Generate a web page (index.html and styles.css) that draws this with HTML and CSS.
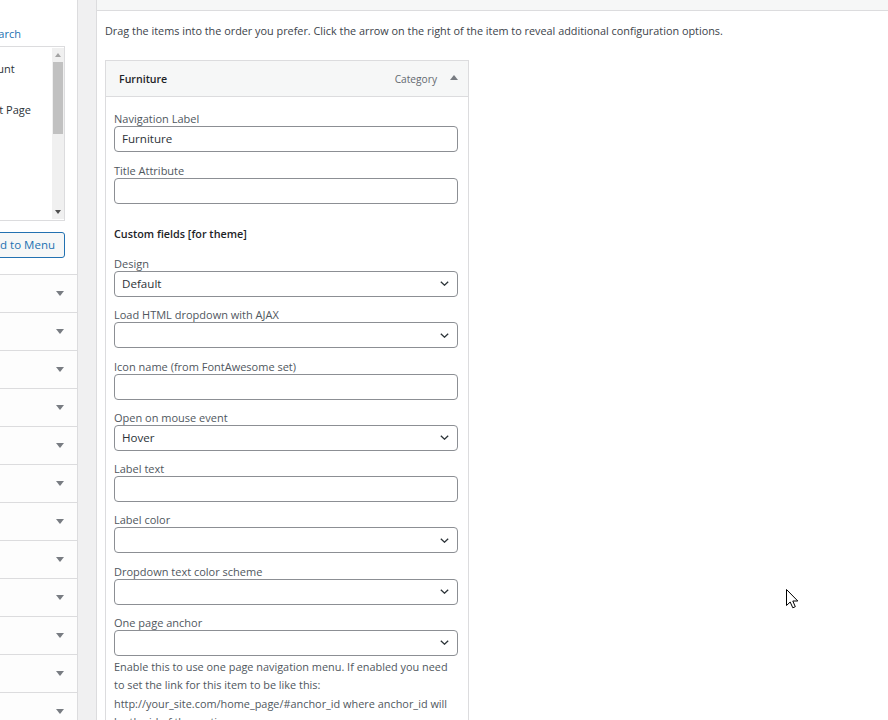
FILE: index.html
```html
<!DOCTYPE html>
<html>
<head>
<meta charset="utf-8">
<title>Menus</title>
<link rel="stylesheet" href="styles.css">
</head>
<body>
<div class="page">
  <aside class="side">
    <div class="side-inner">
      <div class="tabs"><a class="tab-link">Search</a></div>
      <div class="listbox">
        <ul class="items">
          <li><span class="cb"></span>My Account</li>
          <li><span class="cb"></span>Blog</li>
          <li><span class="cb"></span>Checkout Page</li>
        </ul>
        <div class="scrollbar">
          <span class="sb-arrow sb-up"></span>
          <span class="sb-track"><span class="sb-thumb"></span></span>
          <span class="sb-arrow sb-down"></span>
        </div>
      </div>
      <div class="actions"><button class="add-btn">Add to Menu</button></div>
      <div class="acc">
        <div class="acc-row"><span class="acc-title">Posts</span><span class="tri-down"></span></div>
        <div class="acc-row"><span class="acc-title">Custom Links</span><span class="tri-down"></span></div>
        <div class="acc-row"><span class="acc-title">Categories</span><span class="tri-down"></span></div>
        <div class="acc-row"><span class="acc-title">Tags</span><span class="tri-down"></span></div>
        <div class="acc-row"><span class="acc-title">Products</span><span class="tri-down"></span></div>
        <div class="acc-row"><span class="acc-title">Portfolio</span><span class="tri-down"></span></div>
        <div class="acc-row"><span class="acc-title">Brands</span><span class="tri-down"></span></div>
        <div class="acc-row"><span class="acc-title">Product categories</span><span class="tri-down"></span></div>
        <div class="acc-row"><span class="acc-title">Product tags</span><span class="tri-down"></span></div>
        <div class="acc-row"><span class="acc-title">Project categories</span><span class="tri-down"></span></div>
        <div class="acc-row"><span class="acc-title">Blocks</span><span class="tri-down"></span></div>
        <div class="acc-row"><span class="acc-title">Block categories</span><span class="tri-down"></span></div>
      </div>
    </div>
  </aside>

  <main class="main">
    <div class="topbar"></div>
    <p class="drag-desc">Drag the items into the order you prefer. Click the arrow on the right of the item to reveal additional configuration options.</p>

    <div class="item">
      <div class="item-head">
        <span class="item-title">Furniture</span>
        <span class="item-type">Category</span>
        <span class="tri-up"></span>
      </div>
      <div class="item-body">
        <div class="field first">
          <div class="label">Navigation Label</div>
          <div class="input">Furniture</div>
        </div>
        <div class="field second">
          <div class="label">Title Attribute</div>
          <div class="input"></div>
        </div>

        <div class="section-title">Custom fields [for theme]</div>

        <div class="field tight">
          <div class="label">Design</div>
          <div class="input select">Default<svg class="chev" viewBox="0 0 9 5"><path d="M0.8 0.8 L4.5 4.2 L8.2 0.8"/></svg></div>
        </div>
        <div class="field">
          <div class="label">Load HTML dropdown with AJAX</div>
          <div class="input select"><svg class="chev" viewBox="0 0 9 5"><path d="M0.8 0.8 L4.5 4.2 L8.2 0.8"/></svg></div>
        </div>
        <div class="field">
          <div class="label">Icon name (from FontAwesome set)</div>
          <div class="input"></div>
        </div>
        <div class="field">
          <div class="label">Open on mouse event</div>
          <div class="input select">Hover<svg class="chev" viewBox="0 0 9 5"><path d="M0.8 0.8 L4.5 4.2 L8.2 0.8"/></svg></div>
        </div>
        <div class="field">
          <div class="label">Label text</div>
          <div class="input"></div>
        </div>
        <div class="field">
          <div class="label">Label color</div>
          <div class="input select"><svg class="chev" viewBox="0 0 9 5"><path d="M0.8 0.8 L4.5 4.2 L8.2 0.8"/></svg></div>
        </div>
        <div class="field">
          <div class="label">Dropdown text color scheme</div>
          <div class="input select"><svg class="chev" viewBox="0 0 9 5"><path d="M0.8 0.8 L4.5 4.2 L8.2 0.8"/></svg></div>
        </div>
        <div class="field">
          <div class="label">One page anchor</div>
          <div class="input select"><svg class="chev" viewBox="0 0 9 5"><path d="M0.8 0.8 L4.5 4.2 L8.2 0.8"/></svg></div>
        </div>
        <p class="help">Enable this to use one page navigation menu. If enabled you need<br>to set the link for this item to be like this:<br>http://your_site.com/home_page/#anchor_id where anchor_id will<br>be the id of the section on your page.</p>
      </div>
    </div>
  </main>
</div>

<svg class="cursor" viewBox="0 0 13 20" width="13" height="20"><path d="M0.5 0.5 L0.5 16.5 L4.2 13 L6.8 18.8 L9.3 17.7 L6.8 12 L11.8 12 Z"/></svg>
</body>
</html>
```

FILE: styles.css
```css
* { box-sizing: border-box; }

html, body {
  margin: 0;
  padding: 0;
}

body {
  width: 888px;
  height: 720px;
  overflow: hidden;
  background: #f0f0f1;
  font-family: "Open Sans", "Noto Sans", "Liberation Sans", sans-serif;
  font-size: 11px;
  color: #3c434a;
  position: relative;
}

.page {
  display: flex;
  height: 720px;
}

/* ---------- left sidebar ---------- */
.side {
  width: 78px;
  flex-shrink: 0;
  background: #fff;
  border-right: 1px solid #dcdcde;
  display: flex;
  justify-content: flex-end;
  overflow: hidden;
}

.side-inner {
  width: 260px;
  flex-shrink: 0;
}

.tabs {
  display: flex;
  justify-content: flex-end;
  padding: 24px 56px 0 0;
  line-height: 20px;
}

.tab-link {
  color: #2271b1;
  font-size: 11px;
}

.listbox {
  margin: 2px 12px 0 10px;
  height: 175px;
  border: 1px solid #dcdcde;
  background: #fff;
  display: flex;
}

.items {
  list-style: none;
  margin: 0;
  padding: 12px 0 0 103px;
  flex: 1;
  color: #2c3338;
  font-size: 11px;
}

.items li {
  line-height: 20.5px;
  display: flex;
  align-items: center;
  white-space: nowrap;
}

.cb {
  width: 14px;
  height: 14px;
  border: 1px solid #8c8f94;
  border-radius: 3px;
  margin-right: 10px;
  flex-shrink: 0;
}

.scrollbar {
  width: 12px;
  margin: 1px 0;
  background: #f0f0f0;
  display: flex;
  flex-direction: column;
  align-items: center;
}

.sb-arrow {
  width: 0;
  height: 0;
  border-left: 3.5px solid transparent;
  border-right: 3.5px solid transparent;
  margin: 5px 0;
}

.sb-up { border-bottom: 4px solid #a3a3a3; }
.sb-down { border-top: 4px solid #505050; }

.sb-track {
  flex: 1;
  width: 100%;
  display: flex;
  flex-direction: column;
  align-items: center;
}

.sb-thumb {
  width: 10px;
  height: 72px;
  background: #c1c1c1;
}

.actions {
  display: flex;
  justify-content: flex-end;
  padding: 11px 12px 16px 0;
}

.add-btn {
  height: 26px;
  padding: 0 9px;
  border: 1px solid #2271b1;
  border-radius: 3px;
  background: #f6f7f7;
  color: #2271b1;
  font-family: inherit;
  font-size: 11.5px;
  line-height: 24px;
  white-space: nowrap;
}

.acc-row {
  height: 38px;
  border-top: 1px solid #dcdcde;
  display: flex;
  align-items: center;
  justify-content: space-between;
  padding: 0 13px 0 10px;
  background: #fdfdfd;
}

.acc-title {
  font-size: 12px;
  color: #1d2327;
  white-space: nowrap;
}

.tri-down {
  width: 0;
  height: 0;
  border-left: 4px solid transparent;
  border-right: 4px solid transparent;
  border-top: 5px solid #787c82;
}

/* ---------- main ---------- */
.main {
  flex: 1;
  margin-left: 18px;
  background: #fff;
  border-left: 1px solid #dcdcde;
}

.topbar {
  height: 11px;
  background: #f6f7f7;
  border-bottom: 1px solid #dcdcde;
}

.drag-desc {
  margin: 10px 0 19px 8px;
  line-height: 20px;
  font-size: 10.85px;
  color: #3c434a;
  white-space: nowrap;
}

.item {
  margin-left: 8px;
  width: 364px;
  border: 1px solid #dcdcde;
  border-bottom: none;
}

.item-head {
  height: 36px;
  background: #f6f7f7;
  border-bottom: 1px solid #dcdcde;
  display: flex;
  align-items: center;
  padding: 0 10px 0 13px;
}

.item-title {
  font-weight: 600;
  color: #1d2327;
  font-size: 10.6px;
  flex: 1;
}

.item-type {
  color: #646970;
  font-size: 10.2px;
  margin-right: 13px;
}

.tri-up {
  width: 0;
  height: 0;
  border-left: 4px solid transparent;
  border-right: 4px solid transparent;
  border-bottom: 5px solid #787c82;
  margin-top: -2px;
}

.item-body {
  padding: 14px 10px 0 8px;
}

.field {
  margin-top: 10.29px;
}

.field.first { margin-top: 0; }
.field.second { margin-top: 10.8px; }
.field.tight { margin-top: 14.2px; }

.label {
  line-height: 15px;
  font-size: 11px;
  color: #50575e;
}

.input {
  height: 26px;
  border: 1px solid #8c8f94;
  border-radius: 4px;
  background: #fff;
  padding: 0 8px 0 7px;
  font-size: 11.6px;
  line-height: 24px;
  color: #2c3338;
  display: flex;
  align-items: center;
}

.select .chev { margin-left: auto; }

.chev {
  width: 9px;
  height: 5px;
  fill: none;
  stroke: #2c3338;
  stroke-width: 1.3;
}

.section-title {
  margin-top: 22px;
  line-height: 16px;
  font-weight: 600;
  font-size: 10.8px;
  color: #1d2327;
}

.help {
  margin: 2px 0 0 0;
  font-size: 10.9px;
  line-height: 18.5px;
  color: #50575e;
  white-space: nowrap;
}

/* ---------- mouse pointer overlay ---------- */
.cursor {
  position: absolute;
  left: 786px;
  top: 589px;
  fill: #fff;
  stroke: #000;
  stroke-width: 1;
  stroke-linejoin: round;
}
```
